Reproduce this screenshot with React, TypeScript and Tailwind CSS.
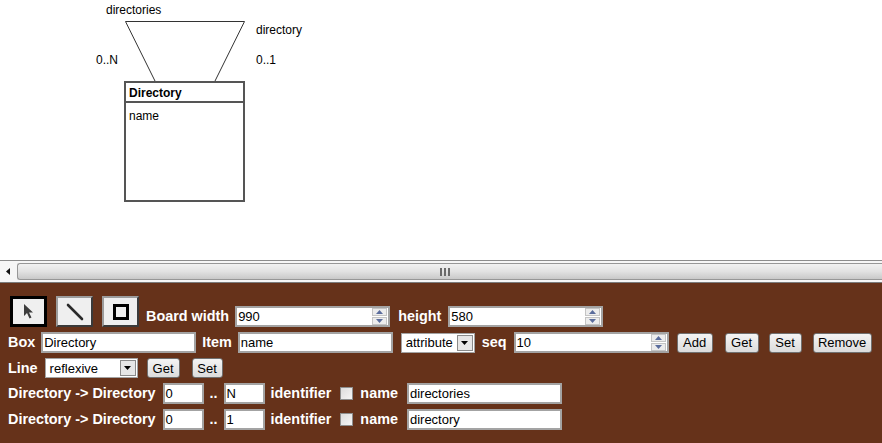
import React from "react";

const FONT = "font-['Liberation_Sans',Arial,sans-serif]";

function Label({ children, className = "" }: { children: React.ReactNode; className?: string }) {
  return <span className={`text-white font-bold text-[14.4px] leading-none whitespace-nowrap ${className}`}>{children}</span>;
}

function Field({ value, width, spin, className = "" }: { value: string; width: number; spin?: boolean; className?: string }) {
  return (
    <div
      className={`relative flex items-center h-[21px] bg-white border-2 border-[#a3a3a3] ${className}`}
      style={{ width }}
    >
      <span className="pl-[1px] text-[13px] leading-none text-black">{value}</span>
      {spin && (
        <div className="absolute right-[1px] top-[0px] bottom-[0px] w-[15px] flex flex-col gap-[1px]">
          <div className="flex-1 flex items-center justify-center bg-[#ececec] border border-[#c4c4c4]">
            <svg width="7" height="4" viewBox="0 0 7 4"><path d="M0 4 L3.5 0 L7 4 Z" fill="#5a6c9c" /></svg>
          </div>
          <div className="flex-1 flex items-center justify-center bg-[#ececec] border border-[#c4c4c4]">
            <svg width="7" height="4" viewBox="0 0 7 4"><path d="M0 0 L3.5 4 L7 0 Z" fill="#5a6c9c" /></svg>
          </div>
        </div>
      )}
    </div>
  );
}

function Select({ value, width, className = "" }: { value: string; width: number; className?: string }) {
  return (
    <div
      className={`flex items-center h-[20px] bg-white border border-[#a3a3a3] ${className}`}
      style={{ width }}
    >
      <span className="flex-1 pl-[4px] text-[13px] leading-none text-black">{value}</span>
      <div className="w-[16px] h-[16px] mr-[1px] flex items-center justify-center bg-[#e6e6e6] border border-[#8a8a8a]">
        <svg width="7" height="4" viewBox="0 0 7 4"><path d="M0 0 L3.5 4 L7 0 Z" fill="#000" /></svg>
      </div>
    </div>
  );
}

function Btn({ children, width, className = "" }: { children: React.ReactNode; width: number; className?: string }) {
  return (
    <div
      className={`h-[20px] flex items-center justify-center rounded-[3px] border border-[#707070] bg-gradient-to-b from-[#f4f4f4] to-[#dcdcdc] text-[13px] leading-none text-black ${className}`}
      style={{ width }}
    >
      {children}
    </div>
  );
}

function Check({ className = "" }: { className?: string }) {
  return <div className={`w-[13px] h-[13px] border border-[#8e8f8f] bg-gradient-to-br from-[#dcdcdc] to-[#f6f6f6] ${className}`} />;
}

function ToolButton({ selected, children, className = "" }: { selected?: boolean; children: React.ReactNode; className?: string }) {
  return (
    <div
      className={`w-[37px] h-[31px] flex items-center justify-center bg-[#efefef] ${
        selected
          ? "border-[3px] border-black"
          : "border-2 border-t-[#9c9c9c] border-l-[#9c9c9c] border-b-[#3a3a3a] border-r-[#3a3a3a]"
      } ${className}`}
    >
      {children}
    </div>
  );
}

function Diagram() {
  return (
    <div className="relative h-[260px] bg-white overflow-hidden text-[12px] leading-none text-black">
      <svg className="absolute left-0 top-0" width="400" height="260">
        <path d="M125.5 21.5 L244.5 21.5 M125.5 21.5 L155 81 M244.5 21.5 L215 81" stroke="#333" strokeWidth="1" fill="none" />
      </svg>
      <span className="absolute left-[106px] top-[4px]">directories</span>
      <span className="absolute left-[256px] top-[24px]">directory</span>
      <span className="absolute left-[96px] top-[54px]">0..N</span>
      <span className="absolute left-[256px] top-[54px]">0..1</span>
      <div className="absolute left-[124px] top-[81px] w-[121px] h-[121px] border-2 border-[#555]">
        <div className="h-[20px] border-b-2 border-[#555] flex items-center pl-[3px] pt-[2px] font-bold">Directory</div>
        <div className="pl-[3px] pt-[7px]">name</div>
      </div>
    </div>
  );
}

function Scrollbar() {
  return (
    <div className="h-[23px] border-t border-[#8c8c8c] bg-[#f6f6f6] flex flex-col">
      <div className="flex-1 flex items-center">
        <div className="w-[16px] flex items-center justify-center">
          <svg width="4" height="7" viewBox="0 0 4 7"><path d="M4 0 L0 3.5 L4 7 Z" fill="#111" /></svg>
        </div>
        <div className="ml-[1px] flex-1 h-[17px] rounded-l-[3px] border border-r-0 border-[#979797] bg-gradient-to-b from-[#f1f1f1] via-[#e2e2e2] to-[#c9c9c9] flex items-center justify-center">
          <div className="flex gap-[2px] ml-[-10px]">
            <div className="w-[2px] h-[8px] bg-[#6a6a6a]" />
            <div className="w-[2px] h-[8px] bg-[#6a6a6a]" />
            <div className="w-[2px] h-[8px] bg-[#6a6a6a]" />
          </div>
        </div>
      </div>
      <div className="h-[1px] bg-[#7b7b7b]" />
    </div>
  );
}

export default function App() {
  return (
    <div className={`w-[882px] h-[443px] overflow-hidden ${FONT}`}>
      <Diagram />
      <Scrollbar />
      <div className="h-[160px] bg-[#66321a] pl-[8px] pt-[13px]">
        {/* row 1: tools + board size */}
        <div className="flex items-end h-[31px]">
          <ToolButton selected className="ml-[2px]">
            <svg width="12" height="15" viewBox="0 0 12 15">
              <path d="M1 0 L1 12 L4 9 L6.5 14.5 L8.5 13.5 L6 8.5 L10 8.5 Z" fill="#3c3c3c" />
            </svg>
          </ToolButton>
          <ToolButton className="ml-[9px]">
            <svg width="18" height="18" viewBox="0 0 18 18">
              <path d="M2 2 L16 16" stroke="#2a2a2a" strokeWidth="2.6" strokeLinecap="round" />
            </svg>
          </ToolButton>
          <ToolButton className="ml-[9px]">
            <div className="w-[16px] h-[16px] border-[3px] border-black" />
          </ToolButton>
          <div className="flex items-center h-[21px]">
            <Label className="ml-[7px]">Board width</Label>
            <Field value="990" width={155} spin className="ml-[6px]" />
            <Label className="ml-[8px]">height</Label>
            <Field value="580" width={155} spin className="ml-[7px]" />
          </div>
        </div>
        {/* row 2: box / item */}
        <div className="flex items-center h-[21px] mt-[5px]">
          <Label>Box</Label>
          <Field value="Directory" width={155} className="ml-[6px]" />
          <Label className="ml-[6px]">Item</Label>
          <Field value="name" width={155} className="ml-[6px]" />
          <Select value="attribute" width={74} className="ml-[8px]" />
          <Label className="ml-[7px]">seq</Label>
          <Field value="10" width={155} spin className="ml-[7px]" />
          <Btn width={36} className="ml-[8px]">Add</Btn>
          <Btn width={34} className="ml-[12px]">Get</Btn>
          <Btn width={33} className="ml-[10px]">Set</Btn>
          <Btn width={59} className="ml-[11px]">Remove</Btn>
        </div>
        {/* row 3: line */}
        <div className="flex items-center h-[20px] mt-[5px]">
          <Label>Line</Label>
          <Select value="reflexive" width={93} className="ml-[7px]" />
          <Btn width={33} className="ml-[9px]">Get</Btn>
          <Btn width={31} className="ml-[12px]">Set</Btn>
        </div>
        {/* rows 4-5: line ends */}
        {[
          { max: "N", name: "directories" },
          { max: "1", name: "directory" },
        ].map((r, i) => (
          <div key={i} className="flex items-center h-[21px] mt-[5px]">
            <Label>Directory -&gt; Directory</Label>
            <Field value="0" width={41} className="ml-[7px]" />
            <Label className="ml-[6px]">..</Label>
            <Field value={r.max} width={41} className="ml-[6px]" />
            <Label className="ml-[6px]">identifier</Label>
            <Check className="ml-[9px]" />
            <Label className="ml-[7px]">name</Label>
            <Field value={r.name} width={155} className="ml-[9px]" />
          </div>
        ))}
      </div>
    </div>
  );
}
